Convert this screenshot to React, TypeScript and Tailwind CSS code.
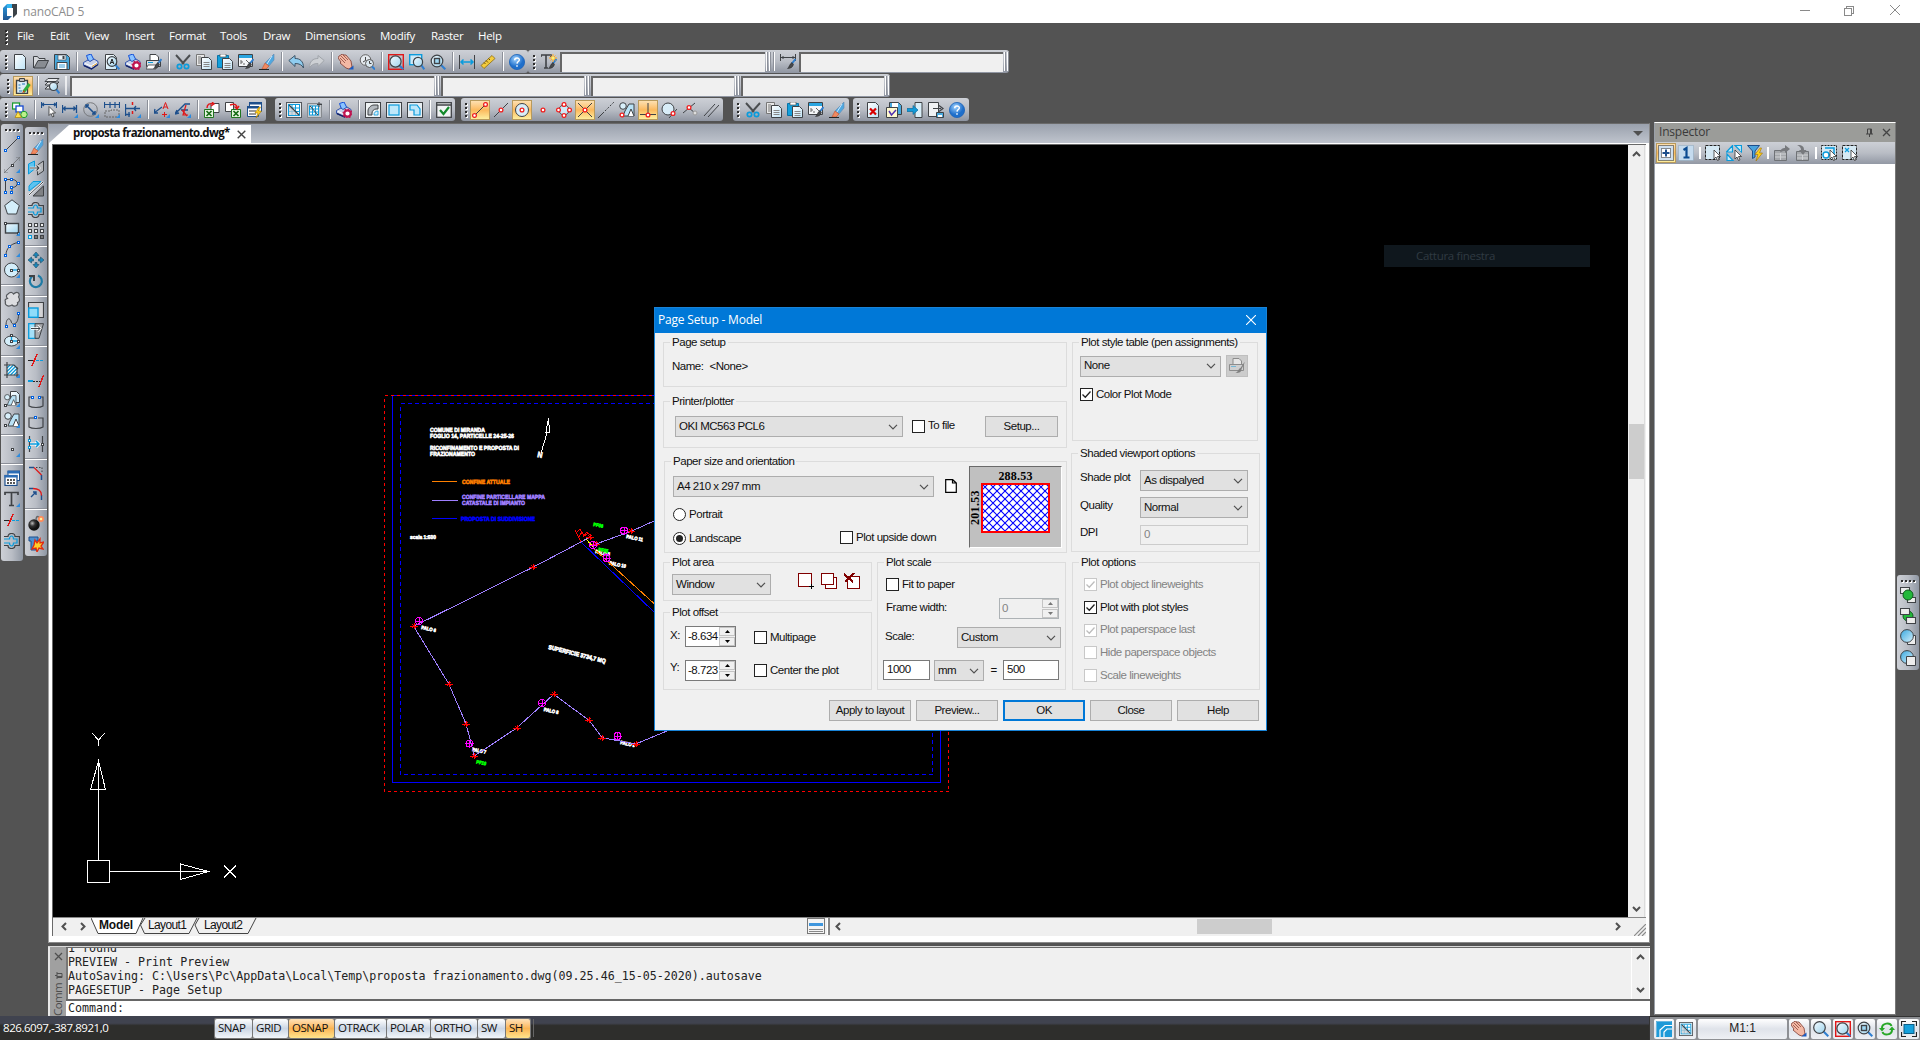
import type { ReactNode } from 'react'

const DK = '#3f4246'
const BL = '#0a9bdc'
const NV = '#1d4f8c'
const LB = '#bfe4f7'
const RD = '#e01818'

const lens = (cx: number, cy: number, r: number) => (
  <>
    <path d={`M${cx + r * 0.7} ${cy + r * 0.7}L15.3 15.3`} stroke="#2f7fd0" strokeWidth="2" />
    <circle cx={cx} cy={cy} r={r} fill="url(#glass)" stroke={DK} strokeWidth="1.2" />
  </>
)
const page = (x: number, y: number, w: number, h: number) => (
  <path d={`M${x} ${y}h${w - 3}l3 3v${h - 3}h-${w}z`} fill="url(#paper)" stroke={DK} />
)
const node = (x: number, y: number, c = '#0060e0', f = '#fff') => (
  <rect x={x - 1} y={y - 1} width="2" height="2" fill={f} stroke={c} shapeRendering="crispEdges" />
)
const ring = (x: number, y: number) => <circle cx={x} cy={y} r="1.9" fill="#fff" stroke="#f02020" strokeWidth="1.3" />
const corner = <path d="M16 12v4h-4z" fill="#2b8be0" />
const cog = (
  <g>
    <circle cx="11.5" cy="11.5" r="3.2" fill="#fff" stroke="#c01550" strokeWidth="2.2" />
    <circle cx="11.5" cy="11.5" r="4.4" fill="none" stroke="#c01550" strokeWidth="1.2" strokeDasharray="1.7 1.7" />
  </g>
)
const printer = (
  <g>
    <path d="M3.500 1.500L8 0l3 6-5 2.500z" fill="#8cc4ff" stroke="#1450d8" />
    <path d="M.5 8.500L5 6l2 1.500L11 5l4 2.500v3L8.500 15 .5 11.500z" fill="#c9d3ea" stroke="#2448a8" strokeWidth=".9" />
    <path d="M1 11.500l7.500 3.500 6.500-4.500" fill="none" stroke="#14246a" strokeWidth="1.500" />
    <path d="M2 9.500l6 2.500 6-3.500" fill="none" stroke="#fff" strokeWidth="1" />
    <path d="M9 12.500l5-3" stroke="#e0a030" />
  </g>
)
const brush = (
  <g>
    <path d="M15.5 5l-4 5" stroke="#2f7fd0" strokeWidth="2" />
    <path d="M12 8.5l1.5 2c-1 3-3 4-6 4 2-1.500 1.500-4 4.500-6z" fill="#46494c" stroke="#222" strokeWidth=".5" />
  </g>
)
const erase = (
  <g>
    <path d="M15 0v6l-5 6-4-3z" fill="#4fa8e0" stroke="#5f88b0" strokeWidth=".6" />
    <path d="M6 9l4 3-3 3H3z" fill="#f08a60" stroke="#c05030" strokeWidth=".6" />
    <path d="M13 2l-5 8" stroke="#cdeaff" />
    <path d="M0 15.500h10" stroke="#222" />
  </g>
)
const cut = (
  <g fill="none">
    <path d="M1 1l8 9M15 1L7 10" stroke="#4a4d50" strokeWidth="1.900" />
    <circle cx="4.500" cy="12.500" r="2.200" stroke={BL} strokeWidth="1.700" />
    <circle cx="11.500" cy="12.500" r="2.200" stroke={BL} strokeWidth="1.700" />
  </g>
)
const copy = (
  <g>
    <path d="M.5.500h8v11h-8z" fill="#e8e8e8" stroke="#777" />
    <path d="M2 3h3M2 5h3M2 7h3M2 9h3" stroke="#777" />
    {page(5.5, 3.5, 10, 12)}
    <path d="M7.500 8.500h6M7.500 10.500h6M7.500 12.500h6" stroke="#888" />
  </g>
)
const paste = (
  <g>
    <path d="M.5 1.500h11v12h-11z" fill="#13a0dc" stroke="#0874a8" />
    <path d="M3 0h6v3H3z" fill="#fff" stroke="#555" strokeWidth=".7" />
    {page(5.5, 4.5, 10, 11)}
    <path d="M7.500 9.500h6M7.500 11.500h6M7.500 13.500h6" stroke="#888" />
  </g>
)
const match = (
  <g>
    <path d="M.5.500h14v12h-14z" fill="#f4f6f8" stroke={DK} />
    <path d="M1 1h13v3H1z" fill="#2aa5e0" />
    <path d="M3 6v4M3 8h2M8 6l3 3M5 10h2" stroke="#666" />
    {brush}
  </g>
)
const help = (
  <g>
    <circle cx="8" cy="8" r="7.600" fill="url(#ball)" stroke="#1c62b8" strokeWidth=".8" />
    <path d="M5.700 6.200c0-3 4.800-2.800 4.600-.2C10.200 7.500 8.100 7.600 8 9.600M8 11.300v1.500" fill="none" stroke="#fff" strokeWidth="1.500" />
  </g>
)
const printset = <g>{printer}{cog}</g>
const zred = (
  <g>
    <rect x=".7" y=".7" width="14.600" height="14.600" fill="none" stroke={RD} strokeWidth="1.400" />
    {lens(7.5, 7.5, 5.6)}
  </g>
)
const zwin = (
  <g>
    {lens(7, 7, 5.8)}
    <rect x="4.500" y="4.500" width="5" height="5" fill="#9fd8f4" stroke={DK} strokeWidth="1.400" />
  </g>
)
const hand = (
  <g>
    <path d="M1 2l2-1 1-1 2 1 2 0 5 6 1 6-3 2-3-1-6-5 1-1-3-4z" fill="#f3b8a4" stroke="#7c3a30" strokeWidth=".8" />
    <path d="M3 2l5 5M5 1l5 5M2 4l5 5" stroke="#7c3a30" strokeWidth=".7" />
    <path d="M15.500 11.500v4h-5z" fill="#1c5cc0" />
  </g>
)
const hatchFrame = (
  <g>
    <rect x=".5" y=".5" width="15" height="15" fill="#e8eef2" stroke="#55585c" />
    <rect x="2.500" y="2.500" width="11" height="11" fill="#fff" stroke={BL} />
    <path d="M6 3v10M9.500 3v10M3 6h10M3 9.500h10" stroke={BL} />
    <path d="M3 3v10h10z" fill="#c8ccd2" opacity=".75" />
    <path d="M3 3l10 10" stroke={DK} strokeWidth="1.200" />
  </g>
)
const shapes = (
  <g>
    <path d="M6 9l4-7h5v12H4z" fill="#b9e2f6" stroke={DK} />
    <path d="M9 14l3-7 3 7" fill="#fff" stroke={DK} />
    <circle cx="4" cy="4" r="3.300" fill="#d8effa" stroke={DK} />
  </g>
)
const trim = (
  <g shapeRendering="crispEdges">
    <path d="M0 8h6" stroke="#222" />
    <path d="M8 8h8" stroke={BL} strokeDasharray="3 1" />
    <path d="M9 2L4 14" stroke={RD} strokeWidth="1.500" />
  </g>
)
const contour = (
  <g fill="none">
    <path d="M0 3.500h4c0-4 7-4 7 0h4.500v9H11c0 4-7 4-7 0H0" stroke={DK} strokeWidth="1.200" />
    <path d="M0 6h5.500c0-4 4-4 4 0h3.500v4H9.500c0 4-4 4-4 0H0" stroke={BL} strokeWidth="1.200" />
  </g>
)
const arrowCursor = <path d="M0 0v9l2-2 1.500 3.500 1.500-.7L3.500 6.500h3z" fill="#fff" stroke="#333" strokeWidth=".8" />

const ICONS: Record<string, ReactNode> = {
  new: page(2.5, 0.5, 11, 15),
  open: (
    <g>
      <path d="M.5 14V2.500h4l1.500 2h6V7" fill="#d6d9dd" stroke={DK} />
      <path d="M1 14L5 6.500h10.500L12 14z" fill="#888c92" stroke={DK} />
    </g>
  ),
  save: (
    <g>
      <path d="M.5.500h12l3 3v12H.5z" fill="#49a9dd" stroke={DK} />
      <path d="M4 1h8v5H4z" fill="#eaf4fa" stroke={DK} strokeWidth=".6" />
      <path d="M8.500 2h2v3h-2z" fill={DK} />
      <path d="M3 8.500h10v7H3z" fill="#fff" stroke={DK} />
      <path d="M5 11h6M5 13h6" stroke="#3a9fd8" />
    </g>
  ),
  print: printer,
  preview: (
    <g>
      {page(1.5, 0.5, 11, 15)}
      {lens(8, 7.5, 4.8)}
      <path d="M6.200 10L8 5l1.800 5M7 8.500h2" fill="none" stroke="#222" />
    </g>
  ),
  printset,
  printbrush: (
    <g>
      <path d="M4 6V.500h6l2.500 2.500V6" fill="#fff" stroke={DK} />
      <path d="M.5 6.500h14v6H.5z" fill="#dfe2e5" stroke={DK} />
      <path d="M2 11h8v4H0z" fill="#fff" stroke={DK} strokeWidth=".8" />
      <path d="M2 8.500h5" stroke={BL} />
      {brush}
    </g>
  ),
  cut, copy, paste, match, erase,
  undo: <path d="M.8 6.500L7 1.500v3c5 0 8.500 2.500 8.500 9.500-1.500-3-4-4.500-8.500-4.500v3z" fill="#8fcdf0" stroke="#3e5568" />,
  redo: <path d="M15.200 6.500L9 1.500v3C4 4.500.5 7 .5 14 2 11 4.500 9.500 9 9.500v3z" fill="#cdd0d4" stroke="#a0a4aa" />,
  hand,
  zclock: (
    <g>
      <circle cx="6.500" cy="6" r="5.300" fill="#e6ebf0" stroke="#666" />
      <circle cx="10.500" cy="9.500" r="4" fill="#dbe8f0" stroke="#555" />
      <path d="M6.500 3v3.500L4 8M10.500 7v2.500h2" fill="none" stroke="#444" />
      <path d="M13 12.500l3 3" stroke="#2f7fd0" strokeWidth="2" />
    </g>
  ),
  zred,
  zblue: (
    <g>
      <rect x=".7" y=".7" width="12" height="10" fill="#cfe9f6" stroke={BL} strokeWidth="1.400" />
      {lens(9, 8, 4.6)}
    </g>
  ),
  zwin,
  measure: (
    <g>
      <path d="M.5 1v14M15.500 1v14" stroke={DK} />
      <path d="M2 8h12M4.500 5.500L2 8l2.500 2.500M11.500 5.500L14 8l-2.500 2.500" fill="none" stroke={BL} strokeWidth="1.500" />
    </g>
  ),
  ruler: (
    <g>
      <path d="M12 1.500l3 3L4 14.500l-3-3z" fill="#f4cc3c" stroke="#8a6a10" strokeWidth=".8" />
      <path d="M4 8.500l1.500 1.500M6 6.500l2 2M8.500 4.500L10 6" stroke="#6a5008" />
    </g>
  ),
  help,
  tstyle: (
    <g>
      <path d="M0 3V1h10v2M5 1v13M3 14h4" fill="none" stroke={DK} strokeWidth="1.600" />
      {brush}
      <path d="M12 0v8M8 4h8M9.500 1.500l5 5M14.500 1.500l-5 5" stroke="#ffa820" />
      <circle cx="12" cy="4" r="1.500" fill="#fff36a" />
    </g>
  ),
  dimstyle: (
    <g>
      <path d="M.5 0v7M15.500 0v7M1 3.500h14M3 2v3M13 2v3" stroke={DK} />
      {brush}
    </g>
  ),
  note: (
    <g>
      <path d="M1.500 2.500h11v13h-11z" fill="#dcecf5" stroke={DK} strokeWidth="1.300" />
      <path d="M4.500.500h5v3h-5z" fill="#bbb" stroke={DK} />
      <path d="M3.500 7h2M3.500 10h2M7 6h3M4 13h3" stroke="#2277bb" />
      <path d="M14.500 6l-6 8" stroke="#2fae3c" strokeWidth="3" />
      <path d="M9 12l-2 3 3-1" fill="#d04010" />
    </g>
  ),
  layerzoom: (
    <g>
      <path d="M4 .500h11l-3 3H1zM4 4h11l-3 3H1zM4 8h9l-3 3H1z" fill="#e9ebee" stroke={DK} />
      {lens(9.5, 8.5, 4)}
    </g>
  ),
  layers: (
    <g>
      <rect x=".5" y="1" width="7" height="6" fill="#fff" stroke="#1a9b30" strokeWidth="1.300" />
      <rect x="4" y="4" width="7" height="6" fill="#fff" stroke="#1548d0" strokeWidth="1.300" />
      <circle cx="12" cy="12.500" r="3.200" fill="#bdf08a" stroke="#1a9b30" />
      <path d="M3 15.500l3-6 3.500 6z" fill="#ffe24a" stroke="#b08a10" strokeWidth=".8" />
    </g>
  ),
  dimlin: (
    <g>
      <path d="M.5 0v6M15.500 0v6M1 2.500h14M3 1L1 2.500 3 4M13 1l2 1.500L13 4" fill="none" stroke={NV} strokeWidth="1.200" />
      <g transform="translate(8 4.500)">{arrowCursor}</g>
    </g>
  ),
  dimhor: (
    <g>
      <path d="M.5 3v8M14.500 3v8M1 6.500h14M3.500 4.500l-2 2 2 2M11.500 4.500l2 2-2 2" fill="none" stroke={NV} strokeWidth="1.300" />
      {corner}
    </g>
  ),
  dimdia: (
    <g>
      <circle cx="7.500" cy="7.500" r="6.800" fill="none" stroke="#77797d" />
      <path d="M3 3l9 9M3 6V3h3M12 9v3H9" fill="none" stroke={NV} strokeWidth="1.500" />
      {corner}
    </g>
  ),
  dimcont: (
    <g>
      <path d="M.5 0v6M6 0v6M11 0v6M15.500 0v6M1 2.500h14" stroke={NV} strokeWidth="1.200" />
      <path d="M1 15V9h6v-1h8v7z" fill="none" stroke="#666" strokeDasharray="2 1" />
      {corner}
    </g>
  ),
  dimbreak: (
    <g>
      <path d="M.5 2v12M1 6.500h14M11 4L9 6.500 11 9M4 10v5M1 12.500h4" fill="none" stroke={NV} strokeWidth="1.300" />
      <path d="M7.500 0v3M7.500 9v3" stroke={RD} strokeWidth="1.500" />
      {corner}
    </g>
  ),
  leader1: (
    <g>
      <path d="M0 11l8-6M0 11l1-4M0 11h4" stroke={NV} strokeWidth="1.300" />
      <path d="M9 7l2.500-6.500L14 7M10 5h3M10.500 10v5M8 12.500h5" fill="none" stroke={RD} />
      {corner}
    </g>
  ),
  leader2: (
    <g>
      <path d="M6 8h7M0 12L10 2h5M0 12l2-4M0 12l4-1" fill="none" stroke={NV} strokeWidth="1.300" />
      <path d="M11 3L8 13h5M7 8l5 6" fill="none" stroke={RD} strokeWidth="1.200" />
      {corner}
    </g>
  ),
  xl1: (
    <g>
      <path d="M7 1.500h8v9H7z" fill="#fff" stroke={DK} />
      <path d="M.5 7.500h9v8h-9z" fill="#e5f5df" stroke="#207520" />
      <path d="M2.500 9l5 5M7.500 9l-5 5" stroke="#156a15" strokeWidth="1.700" />
      <path d="M3 6c0-4 3-5 6-4M8 0l2 2-3 2" fill="none" stroke={RD} strokeWidth="1.400" />
    </g>
  ),
  xl2: (
    <g>
      <path d="M.5.500h8v9h-8z" fill="#fff" stroke={DK} />
      <path d="M6.500 7.500h9v8h-9z" fill="#e5f5df" stroke="#207520" />
      <path d="M8.500 9l5 5M13.500 9l-5 5" stroke="#156a15" strokeWidth="1.700" />
      <path d="M5 3c5-2 7 0 7 3M9.500 4.500L12 7l2-3" fill="none" stroke={RD} strokeWidth="1.400" />
    </g>
  ),
  tabbolt: (
    <g>
      <path d="M3.500.500h12v9h-12z" fill="#fff" stroke={NV} />
      <path d="M3 0h13v2.500H3z" fill={NV} />
      <path d="M1.500 4.500h11v10h-11z" fill="#fff" stroke={NV} />
      <path d="M1 4h12v2.500H1z" fill={NV} />
      <path d="M3 9h7M3 12h7" stroke="#333" />
      <path d="M13 5l-4 6h3l-2 5 5.500-7h-3l2-4z" fill="#ffd21c" stroke="#b07a00" strokeWidth=".6" />
    </g>
  ),
  hatch1: hatchFrame,
  hatch2: (
    <g>
      <path d="M.5 1.500h14v14H.5z" fill="#c5c9ce" stroke="#85898e" />
      <rect x="2.500" y="4" width="9" height="9" fill="#fff" stroke={BL} />
      <path d="M5.500 4v9M8.500 4v9M3 7h8M3 10h8" stroke={BL} />
      <path d="M3 4l8 9M12 0v5M10 2.500h5" stroke={DK} />
    </g>
  ),
  vparc: (
    <g>
      <rect x=".5" y=".5" width="15" height="15" fill="#eef2f4" stroke={DK} />
      <path d="M3 13V9c0-3 3-6 6-6h4v4h-2c-2 0-4 2-4 4v2z" fill="#b4bac0" stroke={DK} />
      <path d="M9 13c0-2 1-4 4-4v4z" fill="#d5f0fb" stroke={BL} strokeWidth=".8" />
    </g>
  ),
  vprect: (
    <g>
      <rect x=".5" y=".5" width="15" height="15" fill="#e8eef2" stroke={DK} />
      <rect x="3" y="3" width="10" height="10" fill="#bfe8fa" stroke={BL} strokeWidth="1.200" />
    </g>
  ),
  vppoly: (
    <g>
      <rect x=".5" y=".5" width="15" height="15" fill="#e8eef2" stroke={DK} />
      <path d="M3 3h7l3 4v6H7V8H3z" fill="#bfe8fa" stroke={BL} strokeWidth="1.200" />
    </g>
  ),
  check: (
    <g>
      <rect x=".7" y=".7" width="14.600" height="14.600" fill="#f2f4f5" stroke={DK} strokeWidth="1.300" />
      <path d="M1 3h14" stroke={DK} strokeWidth="1.500" />
      <path d="M4 8l3.500 4L13 5" fill="none" stroke="#128a2a" strokeWidth="2.200" />
    </g>
  ),
  snend: <g><path d="M3 13L13 3" stroke={DK} />{ring(2.5, 13.5)}{ring(13.5, 2.5)}</g>,
  snmid: <g><path d="M1 15L15 1" stroke={DK} />{ring(8, 8)}</g>,
  sncen: <g><circle cx="8" cy="8" r="6.500" fill="#d8edf8" stroke={DK} />{ring(8, 8)}</g>,
  snnode: ring(8, 8),
  snquad: (
    <g>
      <circle cx="8" cy="8" r="5" fill="#cfe8f6" stroke={DK} />
      {ring(8, 2.5)}{ring(13.5, 8)}{ring(8, 13.5)}{ring(2.5, 8)}
    </g>
  ),
  snint: <g><path d="M1 1l14 14M15 1L1 15" stroke={DK} />{ring(8, 8)}</g>,
  snext: <g><path d="M0 16l6-6" stroke={DK} /><path d="M7 9l9-9" stroke={DK} strokeDasharray="2 1.500" /></g>,
  snins: <g>{shapes}{ring(3, 13)}</g>,
  snperp: <g><path d="M8 1v12M0 12.500h16" stroke={DK} />{ring(8, 13)}</g>,
  sntan: <g><circle cx="7" cy="7" r="6" fill="#d8edf8" stroke={DK} /><path d="M8 16l8-9" stroke={DK} />{ring(12, 11.5)}</g>,
  snnear: (
    <g>
      <path d="M1 11l6-5 6-5M7 6l6 5" stroke={DK} />
      {ring(7, 5.5)}
      <circle cx="13" cy="11" r="2" fill="#ddd" stroke="#999" />
    </g>
  ),
  snpar: <path d="M1 14L12 2M5 15L16 3" stroke={DK} />,
  xdel: <g>{page(2.5, 0.5, 11, 15)}<path d="M5 6.500l6 6M11 6.500l-6 6" stroke="#d80000" strokeWidth="2.200" /></g>,
  savecheck: (
    <g>
      <path d="M3.500.500h9l3 3v9h-12z" fill="#49a9dd" stroke={DK} />
      <path d="M6 1h6v4H6z" fill="#fff" />
      <path d="M.5 5.500h11v10H.5z" fill="#fff9cf" stroke={DK} />
      <path d="M3 9l2.500 4L10 8" fill="none" stroke="#5030b0" strokeWidth="1.500" />
    </g>
  ),
  import: (
    <g>
      <path d="M8 .500h7v15H8z" fill="#d9eef8" stroke={DK} />
      <path d="M0 6.500h6v-3l5 4.500-5 4.500v-3H0z" fill="#129ad8" stroke="#0b6a9c" strokeWidth=".7" />
    </g>
  ),
  export: (
    <g>
      <path d="M.5.500h10v14H.5z" fill="#f0f2f4" stroke={DK} />
      <path d="M5 6.500h8M11 3.500l4 3-4 3" fill="none" stroke={DK} strokeWidth="1.200" />
      <path d="M8.500 10.500h7v5h-7z" fill="#49a9dd" stroke={DK} />
      <path d="M10 13h4v2h-4z" fill="#fff" />
    </g>
  ),
  line: <g><path d="M2 14L14 2" stroke={DK} />{node(1.5, 14.5)}{node(14.5, 1.5)}</g>,
  xline: (
    <g>
      <path d="M0 16L16 0M0 12v4h4M12 0h4v4" fill="none" stroke="#777a7e" />
      {node(8, 8, DK)}
      {corner}
    </g>
  ),
  pline: (
    <g>
      <path d="M1.500 14V1.500H8c7 0 7 8 0 8v4" fill="none" stroke={DK} />
      {node(1.5, 1.5)}{node(7.5, 1.5)}{node(14.5, 5)}{node(7.5, 9.5)}{node(1.5, 14.5)}{node(7.5, 14.5)}
    </g>
  ),
  pentagon: <path d="M8 .800L15.300 6.500 12.500 15h-9L.7 6.500z" fill="#d4eefa" stroke={DK} />,
  rect: (
    <g>
      <rect x="1.500" y="3.500" width="13" height="9.500" fill="url(#glass)" stroke={DK} strokeWidth="1.400" />
      {node(1.5, 3, DK)}{node(14, 13, DK)}
      {corner}
    </g>
  ),
  arc: <g><path d="M2 14C2 8 6 3 14 1.500" fill="none" stroke={DK} />{node(1.5, 14.500)}{node(5.500, 5.500)}{node(14.500, 1.500)}{corner}</g>,
  circle: (
    <g>
      <circle cx="7.500" cy="8" r="7" fill="#d4eefa" stroke={DK} />
      <path d="M8 8h6" stroke={BL} strokeWidth="1.300" />
      {node(7.5, 8, DK)}{node(14.5, 8, DK)}
      {corner}
    </g>
  ),
  cloud: (
    <path
      d="M4 3c3-3 5-1 5.500 0C13-.5 16.500 2 14.500 6c2 3 .5 5-1 5.500 1 3-3 5-5.500 2.500C4 16.500.5 14 1.500 11 .5 9 1.500 8 3.500 7.500 2 6 2 4 4 3z"
      fill="#dcdde0" stroke="#55585c" strokeWidth="1.200"
    />
  ),
  spline: <g><path d="M2 14c0-9 4-8 5-5 1 6 8 3 7.500-7" fill="none" stroke={DK} />{node(2, 14.500)}{node(10, 13.500)}{node(14.500, 1.500)}</g>,
  ellipse: (
    <g>
      <ellipse cx="7.500" cy="8" rx="7" ry="5" fill="#d4eefa" stroke={DK} />
      <path d="M8 8h6M7.500 4v4" stroke={BL} strokeWidth="1.300" />
      {node(7.5, 8, DK)}{node(14.5, 8, DK)}{node(7.5, 2.5, DK)}
      {corner}
    </g>
  ),
  hatch: (
    <g>
      <path d="M3 3h7l3 3v7H3z" fill="#fff" />
      <path d="M3 6l3-3M3 9.500L9.500 3M3 13l9-9M6.500 13L13 6.500M10 13l3-3" stroke={BL} strokeWidth="1.300" />
      <path d="M3 0v16M13 5v10M0 3h10l4 4M0 13h15" fill="none" stroke={DK} strokeWidth="1.200" />
      {corner}
    </g>
  ),
  block1: (
    <g>
      {page(6.5, 0.5, 9, 11)}
      <g transform="translate(0 3) scale(.8)">{shapes}</g>
      {node(1.5, 14, DK)}
      {corner}
    </g>
  ),
  block2: <g>{shapes}{node(1.5, 13, DK)}{corner}</g>,
  point: <g>{node(8, 8, DK)}{corner}</g>,
  table: (
    <g>
      <rect x="4" y="1" width="11.500" height="9.500" fill="#fff" stroke={NV} />
      <path d="M3.500 1h12v2.500h-12z" fill="#2b6cb5" />
      <rect x="1" y="5.500" width="12" height="10" fill="#fff" stroke={NV} strokeWidth="1.200" />
      <path d="M.5 5h13v2.500H.5z" fill="#2b6cb5" />
      <path d="M3 10h8M3 13h8" stroke="#222" strokeWidth="1.500" strokeDasharray="2 1" />
    </g>
  ),
  text: <g><path d="M1 4V1.500h13V4M7.500 1.500v13M5 14.500h5" fill="none" stroke={DK} strokeWidth="1.700" />{corner}</g>,
  trim, contour,
  mirror: (
    <g>
      <path d="M.5 14V4l6-3v8z" fill="#5cc3f0" stroke={BL} />
      <path d="M9.500 9V5l6-4v10l-6 4z" fill="#b5b7ba" stroke={DK} />
      <path d="M2 8h9M8.500 5.500L11 8l-2.500 2.500" fill="none" stroke="#fff" strokeWidth="2.600" />
      <path d="M2 8h9M8.500 5.500L11 8l-2.500 2.500" fill="none" stroke={DK} strokeWidth="1.200" />
    </g>
  ),
  mirror2: (
    <g>
      <path d="M1 10V5l4-4.500h8z" fill="#5cc3f0" stroke={BL} />
      <path d="M5 15L15.500 5v10z" fill="#7f8184" stroke={DK} />
      <path d="M1 14L15 1" stroke="#fff" strokeWidth="2" />
      <path d="M1 14L15 1" stroke={DK} />
    </g>
  ),
  array: (
    <g fill="#f0f0f0" stroke={DK} strokeWidth="1.100" shapeRendering="crispEdges">
      {[1, 7, 13].map((x) => [1, 7, 13].map((y) => (
        <rect key={`${x}-${y}`} x={x - 0.5} y={y - 0.5} width="3" height="3"
          fill={x === 1 && y === 13 ? '#cdeffc' : y === 13 ? '#777' : '#f0f0f0'} stroke={x === 1 && y === 13 ? BL : DK} />
      )))}
    </g>
  ),
  move: (
    <g fill="#1a88bc" stroke="#2c5870" strokeWidth=".7">
      <path d="M8 0l3 3.500H9v2H7v-2H5zM8 16l3-3.500H9v-2H7v2H5zM0 8l3.500-3v2h2v2h-2v2zM16 8l-3.500-3v2h-2v2h2v2z" />
    </g>
  ),
  rotate: (
    <g fill="none">
      <path d="M10 2.500A6 6 0 1 1 4 3.500" stroke="#1f7ba5" strokeWidth="2.200" />
      <path d="M1 3h5v5" stroke={DK} strokeWidth="2" />
    </g>
  ),
  scale: (
    <g>
      <path d="M.5.500h15v15h-15z" fill="#d4d4d6" stroke={DK} strokeWidth="1.200" />
      <rect x=".7" y="6" width="9.300" height="9.300" fill="#8fdcfa" stroke={BL} strokeWidth="1.400" />
    </g>
  ),
  stretch: (
    <g>
      <path d="M.7.700h8v14.600h-8z" fill="#a5e0f8" stroke={BL} strokeWidth="1.300" />
      <path d="M7 .700h8.500L11 15.300H7z" fill="#a9abae" stroke={DK} />
      <path d="M3 5.500h9M9.500 3L12 5.500 9.500 8" fill="none" stroke="#fff" strokeWidth="2.500" />
      <path d="M3 5.500h9M9.500 3L12 5.500 9.500 8" fill="none" stroke={DK} />
    </g>
  ),
  extend: (
    <g shapeRendering="crispEdges">
      <path d="M0 8h5" stroke={BL} strokeWidth="1.300" />
      <path d="M5 8h7" stroke="#222" strokeDasharray="2 1" />
      <path d="M15.500 2L11 14" stroke={RD} strokeWidth="1.500" />
    </g>
  ),
  break1: <g><path d="M3 3H1v9c3 2 11 2 14 0V3h-2" fill="none" stroke={DK} strokeWidth="1.200" />{node(4.5, 3)}{node(11.5, 3)}</g>,
  break2: <g><path d="M6 3H1v9c3 2 11 2 14 0V3h-5" fill="none" stroke={DK} strokeWidth="1.200" />{node(7.5, 2.500)}</g>,
  join: (
    <g>
      <path d="M1.500 0v16M14.500 0v16" stroke={DK} strokeWidth="1.200" />
      <path d="M2 8h9M8 5l3 3-3 3" fill="none" stroke="#fff" strokeWidth="3" />
      <path d="M2 8h9M8 5l3 3-3 3" fill="none" stroke={BL} strokeWidth="1.500" />
      {node(1.5, 4, BL)}{node(1.5, 11, BL)}{node(14.5, 8, DK)}
    </g>
  ),
  chamfer: (
    <g>
      <path d="M1 2.500h5M13.500 10v5" stroke={NV} strokeWidth="1.500" />
      <path d="M8 2.500h6v6" fill="none" stroke={DK} strokeDasharray="1.500 1.500" />
      <path d="M6 2.500l7.500 7.500" stroke={RD} strokeWidth="1.300" />
    </g>
  ),
  fillet: (
    <g>
      <path d="M1 2.500h4M13.500 9v5M3 11l5-5M5 6h3v3" fill="none" stroke={NV} strokeWidth="1.400" />
      <path d="M5 2.500c5 0 8.500 2 8.500 7" fill="none" stroke={RD} strokeWidth="1.300" />
    </g>
  ),
  bomb: (
    <g>
      <circle cx="6" cy="10" r="5.700" fill="url(#bomb)" />
      <path d="M8 5c0-5 3-4 4-1" fill="none" stroke="#666" strokeWidth="1.300" />
      <circle cx="13" cy="4" r="3" fill="#ff8a5a" />
      <circle cx="13" cy="4" r="1.300" fill="#fff29a" />
    </g>
  ),
  explode: (
    <g>
      <path d="M1 1h9v4H8v9H3V5H1z" fill="#4f90d0" stroke={NV} />
      <path d="M7 4l2 3 3-4 0 4 4-1-3 4 2 3-4-1-2 4-1-4-4 1 2-4z" fill="#ffcf2a" stroke="#e02a10" strokeWidth="1.300" />
    </g>
  ),
  ord1: (
    <g>
      <path d="M.5.500h9v6h-9zM7.500 10.500h8v5h-8z" fill="#ececec" stroke={DK} strokeWidth="1.100" />
      <circle cx="8" cy="8" r="5" fill="#22b83a" stroke="#0d5a1a" />
    </g>
  ),
  ord2: (
    <g>
      <circle cx="8" cy="8" r="5" fill="#22b83a" stroke="#0d5a1a" />
      <path d="M.5.500h9v6h-9zM6.500 9.500h9v6h-9z" fill="#ececec" stroke={DK} strokeWidth="1.100" />
    </g>
  ),
  ord3: <g><path d="M7.500 6.500h8v9h-8z" fill="#ececec" stroke={DK} /><circle cx="7" cy="7" r="6.400" fill="url(#ball2)" stroke={DK} /></g>,
  ord4: <g><circle cx="7" cy="7" r="6.400" fill="url(#ball2)" stroke={DK} /><path d="M6.500 6.500h9v9h-9z" fill="#ececec" stroke={DK} /></g>,
  inadd: (
    <g>
      <rect x=".5" y=".5" width="15" height="15" fill="#cfe0f0" stroke="#222" strokeDasharray="1 1" />
      <rect x="3.500" y="3.500" width="9" height="9" fill="#fff" stroke="#222" strokeDasharray="1 1" />
      <path d="M8 4.500v7M4.500 8h7" stroke={NV} strokeWidth="2" />
    </g>
  ),
  inone: (
    <g>
      <rect x=".5" y=".5" width="15" height="15" fill="#c5dbee" stroke="#8aa4bb" strokeDasharray="1 1" />
      <path d="M5.500 5l3-2v9.500M5.500 12.500h6" fill="none" stroke="#0a4a90" strokeWidth="2.200" />
    </g>
  ),
  insel: (
    <g>
      <rect x=".5" y=".5" width="14" height="14" fill="#d5e9f4" stroke="#222" strokeDasharray="3 1" />
      <g transform="translate(9 5)">{arrowCursor}</g>
    </g>
  ),
  insim: (
    <g>
      <path d="M.5 7l6-6.500v6.500zM1 15.500V9l6 6.500zM9 .500h6.500V7z" fill="#c5ecfb" stroke={BL} strokeWidth="1.200" />
      <g transform="translate(9 5)">{arrowCursor}</g>
    </g>
  ),
  infilt: (
    <g>
      <path d="M.5.500h12L8 6v6l-2.500 1.500V6z" fill="#4aa3dd" stroke={NV} />
      <path d="M13 3l-5 6.500h3L9 16l6.500-8h-3l2-5z" fill="#ffd21c" stroke="#a07000" strokeWidth=".6" />
    </g>
  ),
  ingr1: (
    <g>
      <path d="M.5 5.500h12v10H.5z" fill="#a5a8ac" stroke="#6f7276" />
      <path d="M1 9h11M1 12h11M6.500 6v9" stroke="#d0d2d5" />
      <path d="M6 8c0-4 3-5 5-5V0l5 4-5 4V6c-2 0-3 0-5 2z" fill="#77797d" />
    </g>
  ),
  ingr2: (
    <g>
      <path d="M1.500 6.500h12v9h-12z" fill="#a5a8ac" stroke="#6f7276" />
      <path d="M2 10h11M2 13h11M7.500 7v8" stroke="#d0d2d5" />
      <path d="M2 0c6 0 7 2 7 5h2.500L8 10 4 5h2C6 3 5 1 2 0z" fill="#77797d" />
    </g>
  ),
  inq1: (
    <g>
      <rect x=".5" y=".5" width="15" height="14" fill="#d5e9f4" stroke="#222" strokeDasharray="2 1" />
      <path d="M4 3h9v7H8" fill="none" stroke={BL} strokeWidth="1.500" />
      <circle cx="5" cy="10" r="3" fill="#fff" stroke={BL} strokeWidth="1.400" />
      <g transform="translate(9 5)">{arrowCursor}</g>
    </g>
  ),
  inq2: (
    <g>
      <rect x=".5" y=".5" width="14" height="14" fill="#d5e9f4" stroke="#222" strokeDasharray="3 1" />
      <path d="M3 3l4 4M7 3L3 7" stroke={BL} strokeWidth="1.200" />
      <g transform="translate(9 5)">{arrowCursor}</g>
    </g>
  ),
  stfill: (
    <g>
      <rect width="16" height="16" fill="#1e9ad8" />
      <path d="M4 16V9l5-4.500h7M8 16v-5l3-3h5" fill="none" stroke="#fff" strokeWidth="1.200" />
      <path d="M.5.500h15M.5.500v15" stroke="#6bb8e0" />
    </g>
  ),
  zoom: lens(6.5, 6.5, 5.8),
  regen: (
    <g fill="none" stroke="#28a828" strokeWidth="2">
      <path d="M3 7c0-5 8-6 9.500-2M13 9c0 5-8 6-9.500 2" />
      <path d="M0 7h6l-3 3.500zM10 9h6l-3-3.500z" fill="#28a828" stroke="none" />
    </g>
  ),
  full: (
    <g>
      <path d="M.5 5V.500H5M11 .500h4.500V5M15.500 11v4.500H11M5 15.500H.5V11" fill="none" stroke="#222" strokeWidth="1.200" />
      <rect x="3" y="3.500" width="10" height="9" fill="#15a0dc" stroke="#0b5d86" />
    </g>
  ),
  grayprint: (
    <g opacity=".75">
      <path d="M4 6V.500h6l2.500 2.500V6" fill="#eee" stroke="#777" />
      <path d="M.5 6.500h14v6H.5z" fill="#cfd0d2" stroke="#777" />
      <path d="M2 8.500h5" stroke="#5ab0d8" />
      <path d="M15.500 4l-4 6c-2 0-2 4-5 5 4 0 6-1 6-4l3-6z" fill="#666" />
    </g>
  ),
}

function Icon({ name, className = '' }: { name: string; className?: string }) {
  return <svg viewBox="0 0 16 16" fill="none" className={`size-4 shrink-0 ${className}`}>{ICONS[name]}</svg>
}

function Defs() {
  return (
    <svg className="absolute size-0">
      <defs>
        <linearGradient id="glass" x1="0" y1="0" x2="1" y2="1"><stop offset="0" stopColor="#f4fbff" /><stop offset="1" stopColor="#9ed4ee" /></linearGradient>
        <linearGradient id="paper" x1="0" y1="0" x2="1" y2="1"><stop offset="0" stopColor="#fff" /><stop offset="1" stopColor={LB} /></linearGradient>
        <radialGradient id="ball" cx=".4" cy=".3"><stop offset="0" stopColor="#9fd2ff" /><stop offset="1" stopColor="#1f6fcb" /></radialGradient>
        <linearGradient id="ball2" x1="0" y1="0" x2="1" y2="1"><stop offset="0" stopColor="#38a8e0" /><stop offset="1" stopColor="#d6f0fb" /></linearGradient>
        <radialGradient id="bomb" cx=".35" cy=".35"><stop offset="0" stopColor="#bbb" /><stop offset=".5" stopColor="#333" /><stop offset="1" stopColor="#111" /></radialGradient>
        <linearGradient id="logo" x1="0" y1="0" x2="0" y2="1"><stop offset="0" stopColor="#2c9be0" /><stop offset="1" stopColor="#1f5590" /></linearGradient>
        <pattern id="mesh" width="8" height="8" patternUnits="userSpaceOnUse">
          <path d="M-1-1l10 10M9-1L-1 9" stroke="#0000ff" strokeWidth="1.100" />
        </pattern>
      </defs>
    </svg>
  )
}

const BAR_H = 'h-[23px] shrink-0 rounded-[3px] bg-gradient-to-b from-[#cdd0d6] via-[#b9bdc5] to-[#8f95a1]'

function Grip() {
  return (
    <div className="flex w-[2px] shrink-0 flex-col gap-[2px]">
      {[0, 1, 2, 3].map((i) => <i key={i} className="block size-[2px] bg-[#2d2d2d] shadow-[1px_1px_0_#fff]" />)}
    </div>
  )
}
function GripH() {
  return (
    <div className="flex gap-[2px]">
      {[0, 1, 2, 3].map((i) => <i key={i} className="block size-[2px] bg-[#2d2d2d] shadow-[1px_1px_0_#fff]" />)}
    </div>
  )
}
function Sep() {
  return <div className="flex w-2 shrink-0 self-stretch py-[2px] pl-[1px]"><i className="w-px bg-[#8c9099]" /><i className="w-px bg-white" /></div>
}
function Cell({ name }: { name: string }) {
  const on = name.endsWith('!')
  return (
    <div className="flex h-full w-[21px] shrink-0 items-center">
      {on ? (
        <span className="-ml-[2px] flex size-[20px] items-center justify-center border border-[#b89a5c] bg-gradient-to-b from-[#fde0b0] via-[#fbb95c] to-[#fdee9e]">
          <Icon name={name.slice(0, -1)} />
        </span>
      ) : (
        <Icon name={name} />
      )}
    </div>
  )
}
function Cells({ items }: { items: string }) {
  return <>{items.split(' ').map((n, i) => (n === '|' ? <Sep key={i} /> : <Cell key={i} name={n} />))}</>
}
function Field({ className }: { className: string }) {
  return (
    <div className="flex h-full shrink-0 items-center">
      <div className={`h-[20px] border-2 border-r-0 border-b-0 border-[#666] border-b-white bg-[#f0f0f0] ${className}`} />
      <i className="ml-[1px] h-[19px] w-px bg-white" /><i className="h-[19px] w-px bg-[#8c9099]" />
      <i className="ml-[1px] h-[19px] w-px bg-white" /><i className="h-[19px] w-px bg-[#8c9099]" />
    </div>
  )
}

const MENU: [string, string][] = [
  ['File', 'w-[33px]'], ['Edit', 'w-[35px]'], ['View', 'w-[40px]'], ['Insert', 'w-[44px]'], ['Format', 'w-[51px]'],
  ['Tools', 'w-[43px]'], ['Draw', 'w-[42px]'], ['Dimensions', 'w-[75px]'], ['Modify', 'w-[51px]'], ['Raster', 'w-[47px]'], ['Help', 'w-[40px]'],
]
const UI = "font-['Open_Sans','Noto_Sans',sans-serif]"

function TitleBar() {
  return (
    <header className={`flex h-[23px] shrink-0 items-center bg-white text-[12px] text-[#8d8d8d] ${UI}`}>
      <svg viewBox="0 0 14 16" className="ml-[3px] h-4 w-[14px]">
        <path d="M4 0h10v10l-4 4V4H4z" fill="#3c4248" />
        <path d="M0 4l4-4v12h5L5 16H0z" fill="url(#logo)" />
        <path d="M4 4h6v8H4z" fill="#fff" />
        <path d="M4 0h5v4H4z" fill="#35b5f0" />
      </svg>
      <span className="ml-[6px] tracking-[-0.15px]">nanoCAD 5</span>
      <svg viewBox="0 0 120 23" className="ml-auto h-[23px] w-[120px]" fill="none" stroke="#8a8a8a" shapeRendering="crispEdges">
        <path d="M0 10.500h10" />
        <path d="M44.500 8.500h7v7h-7zM46.500 8V6.500h7v7H52" />
        <path d="M90 5l10 10M100 5L90 15" shapeRendering="auto" />
      </svg>
    </header>
  )
}

function MenuBar() {
  return (
    <nav className={`flex h-[27px] shrink-0 items-center bg-[#535353] pl-[5px] text-[11.500px] tracking-[-0.300px] text-white ${UI}`}>
      <Grip />
      <div className="ml-[10px] flex pb-[2px]">{MENU.map(([t, w]) => <span key={t} className={w}>{t}</span>)}</div>
    </nav>
  )
}

function Toolbars() {
  return (
    <div className="flex h-[72px] shrink-0 flex-col gap-px">
      <div className="flex h-[23px]">
        <div className={`flex w-[528px] items-center pl-[5px] ${BAR_H}`}>
          <Grip /><i className="w-[5px] shrink-0" />
          <Cells items="new open save | print preview printset printbrush | cut copy paste match erase | undo redo | hand zclock | zred zblue zwin | measure ruler | help" />
        </div>
        <div className={`flex w-[481px] items-center pl-[5px] ${BAR_H}`}>
          <Grip /><i className="w-[6px] shrink-0" />
          <Icon name="tstyle" /><i className="w-[3px] shrink-0" />
          <Field className="w-[205px]" /><i className="w-[2px]" /><Sep />
          <Icon name="dimstyle" /><i className="w-[3px] shrink-0" />
          <Field className="w-[204px]" />
        </div>
      </div>
      <div className={`flex w-[890px] items-center pl-[7px] ${BAR_H}`}>
        <Grip /><i className="w-[6px] shrink-0" />
        <Cells items="note! | layerzoom" /><i className="h-[19px] w-[2px] shrink-0 bg-white/70" /><i className="w-[3px] shrink-0" />
        <Field className="w-[364px]" /><i className="w-[2px]" />
        <Field className="w-[143px]" /><i className="w-[2px]" />
        <Field className="w-[143px]" /><i className="w-[2px]" />
        <Field className="w-[143px]" />
      </div>
      <div className="flex h-[23px]">
        <div className={`flex w-[266px] items-center pl-[5px] ${BAR_H}`}>
          <Grip /><i className="w-[5px] shrink-0" />
          <Cells items="layers | dimlin dimhor dimdia dimcont dimbreak | leader1 leader2 | xl1 xl2 tabbolt" />
        </div>
        <div className={`ml-[9px] flex w-[180px] items-center pl-[4px] ${BAR_H}`}>
          <Grip /><i className="w-[5px] shrink-0" />
          <Cells items="hatch1 hatch2 | printset | vparc vprect vppoly | check" />
        </div>
        <div className={`ml-[6px] flex w-[262px] items-center pl-[4px] ${BAR_H}`}>
          <Grip /><i className="w-[5px] shrink-0" />
          <Cells items="snend! snmid sncen! snnode snquad snint! snext snins snperp! sntan snnear snpar" />
        </div>
        <div className={`ml-[10px] flex w-[116px] items-center pl-[4px] ${BAR_H}`}>
          <Grip /><i className="w-[6px] shrink-0" />
          <Cells items="cut copy paste match erase" />
        </div>
        <div className={`ml-[4px] flex w-[116px] items-center pl-[4px] ${BAR_H}`}>
          <Grip /><i className="w-[6px] shrink-0" />
          <Cells items="xdel savecheck import export help" />
        </div>
      </div>
    </div>
  )
}

function VBar({ items, className }: { items: string; className: string }) {
  return (
    <div className={`flex w-[22px] shrink-0 flex-col items-center rounded-[3px] bg-gradient-to-r from-[#cdd0d6] via-[#b9bdc5] to-[#8f97a3] ${className}`}>
      <GripH />
      <div className="mt-[5px] flex flex-col">
        {items.split(' ').map((n, i) =>
          n === '|' ? (
            <div key={i} className="-mx-[3px] flex h-2 flex-col pt-px"><i className="h-px bg-[#8c9099]" /><i className="h-px bg-white" /></div>
          ) : (
            <Icon key={i} name={n} className="mb-[5px]" />
          ),
        )}
      </div>
    </div>
  )
}

const star = (x: number, y: number) => `M${x - 4} ${y}h8M${x} ${y - 3}v6M${x - 2} ${y - 2}l4 4M${x + 2} ${y - 2}l-4 4`
const target = (x: number, y: number) => (
  <g key={`${x}`}><circle cx={x} cy={y} r="3.500" /><path d={`M${x - 4} ${y}h8M${x} ${y - 4}v8`} /></g>
)

function Label({ x, y, w, color = '#fff', size = 6, turn = 0, children }: { x: number; y: number; w: number; color?: string; size?: number; turn?: number; children: string }) {
  return (
    <text x={x} y={y} fill={color} stroke={color} strokeWidth=".6" fontSize={size} textLength={w} lengthAdjust="spacingAndGlyphs" transform={`rotate(${turn} ${x} ${y})`}>
      {children}
    </text>
  )
}

function Drawing() {
  return (
    <svg viewBox="53 145 1575 772" className="block h-[772px] w-[1575px]" fill="none" shapeRendering="crispEdges">
      <g>
        <path d="M392.500 395v388M940.500 395v388" stroke="#00f" />
        <path d="M393 395.500h548" stroke="#00f" />
        <path d="M392 782.500h549" stroke="#00f" />
        <rect x="400.500" y="403.500" width="532" height="371" stroke="#00f" strokeDasharray="4 3" />
        <rect x="384.500" y="395.500" width="564" height="396" stroke="#f00" strokeDasharray="3 3" />
      </g>
      <g fontFamily="Liberation Sans" fontWeight="bold" textRendering="geometricPrecision">
        <Label x={430} y={431.5} w={55}>COMUNE DI MIRANDA</Label>
        <Label x={430} y={437.5} w={84}>FOGLIO 14, PARTICELLE 24-25-26</Label>
        <Label x={430} y={450} w={89}>RICONFINAMENTO E PROPOSTA DI</Label>
        <Label x={430} y={456} w={45}>FRAZIONAMENTO</Label>
        <Label x={462} y={483.5} w={48} color="#ff8000">CONFINE ATTUALE</Label>
        <Label x={462} y={499} w={83} color="#9f7fff">CONFINE PARTICELLARE MAPPA</Label>
        <Label x={462} y={505} w={63} color="#9f7fff">CATASTALE DI IMPIANTO</Label>
        <Label x={461} y={520.5} w={74} color="#0000ff">PROPOSTA DI SUDDIVISIONE</Label>
        <Label x={410} y={539} w={26} size={5.5}>scala 1:500</Label>
        <Label x={548} y={649} w={59} turn={14}>SUPERFICIE 3734,7 MQ</Label>
        <Label x={421} y={629} w={15} size={5} turn={12}>PALO 6</Label>
        <Label x={472} y={751} w={14} size={5} turn={12}>PALO 7</Label>
        <Label x={543.5} y={711} w={15} size={5} turn={12}>PALO 8</Label>
        <Label x={620} y={744} w={15} size={5} turn={12}>PALO 9</Label>
        <Label x={626} y={538} w={17} size={5} turn={12}>PALO 11</Label>
        <Label x={595} y={553} w={15} size={5} turn={12}>PALO 5</Label>
        <Label x={609} y={564.5} w={17} size={5} turn={12}>PALO 10</Label>
        <Label x={593} y={526} w={10} size={5} turn={12} color="#00ff00">PF06</Label>
        <Label x={598} y={551} w={10} size={5} turn={12} color="#00ff00">PF05</Label>
        <Label x={476} y={763.5} w={10} size={5} turn={12} color="#00ff00">PF10</Label>
        <Label x={537} y={457} w={5} size={8} turn={12}>N</Label>
      </g>
      <path d="M548.500 418l-2.500 14h3.500zM547 433l-6 20" stroke="#fff" />
      <path d="M432 481.500h25M593 548L654 603.500" stroke="#ff8000" />
      <path d="M432 500.500h26" stroke="#9f7fff" />
      <path d="M432 518.500h25M581 542L654 612" stroke="#00f" />
      <path d="M586 539l8 9" stroke="#ff0" />
      <path
        d="M654 521l-22 10-36 13M589 537.500l-8 4.500-47.500 25-119.800 59.300 35 57.400 17.300 40 8.300 32.300 42.400-28 37-33.700 35.300 26 13.300 17.400 33.400 6.300L667 731"
        stroke="#9f7fff"
      />
      <path d={[star(414, 626), star(533, 567), star(449, 684), star(466, 724), star(474, 756), star(517, 728), star(554, 694), star(589, 720), star(602, 738), star(636, 744), star(631, 531), star(590, 537), star(596, 544)].join('')} stroke="#f00" />
      <path d="M575 530l6 12M576 533l4-4M580 529l4 7 5-3M583 537l4-5 3 3M578 538l4-6" stroke="#f00" />
      <g stroke="#f0f">
        {target(419, 621)}{target(469.5, 743.5)}{target(542, 703)}{target(617.5, 736)}{target(624, 530.5)}{target(593, 545)}{target(606.5, 558)}
      </g>
      <g stroke="#fff">
        <path d="M87.500 860.500h22v22h-22zM98.500 860V761M98.500 761l-8 28.500h15zM110 871.500h99M180.500 864v15.500l28-8z" />
        <path d="M92 733l6.500 7L105 733M98.500 740v5.500M224 865.500l12 12M236 865.500l-12 12" />
      </g>
    </svg>
  )
}

function Chevron({ dir, className = '' }: { dir: 'up' | 'down' | 'left' | 'right'; className?: string }) {
  const d = { up: 'M1 6l3.500-3.500L8 6', down: 'M1 3l3.500 3.500L8 3', left: 'M6 1L2.500 4.500 6 8', right: 'M3 1l3.500 3.500L3 8' }[dir]
  return <svg viewBox="0 0 9 9" className={`size-[9px] shrink-0 ${className}`}><path d={d} fill="none" stroke="#505050" strokeWidth="2" /></svg>
}

function DocumentWindow() {
  return (
    <section className="flex h-[820px] w-[1602px] shrink-0 flex-col border border-t-[#6a6a6a] border-r-[#8a8a8a] border-b-[#8a8a8a] border-l-[#a0a0a0] bg-white">
      <div className="flex h-[19px] shrink-0 items-end bg-gradient-to-b from-[#9aa1ad] to-[#bfc4cd]">
        <div className="flex h-[18px] w-[202px] bg-white pl-[24px] text-[11.500px] font-bold leading-[16px] text-[#111] [clip-path:polygon(0_100%,20px_0,100%_0,100%_100%)]">
          <span className={`whitespace-nowrap tracking-[-0.600px] ${UI}`}>proposta frazionamento.dwg*</span>
          <svg viewBox="0 0 9 9" className="mt-[5px] mr-[5px] ml-auto size-[9px] shrink-0"><path d="M.7.700l7.600 7.600M8.300.700L.7 8.300" stroke="#444" strokeWidth="1.400" /></svg>
        </div>
        <svg viewBox="0 0 10 5" className="mb-[7px] ml-auto mr-[6px] h-[5px] w-[10px]"><path d="M0 0h10L5 5z" fill="#505050" /></svg>
      </div>
      <div className="mt-[1px] ml-[3px] mr-[3px] flex h-[792px] flex-col border-t border-l border-[#696969] bg-[#f0f0f0]">
        <div className="flex h-[772px]">
          <div className="relative h-[772px] w-[1575px] bg-black">
            <Drawing />
            <div className={`absolute left-[1331px] top-[100px] h-[22px] w-[206px] bg-[#0f171d] pl-[32px] text-[11.500px] leading-[22px] tracking-[-0.3px] text-[#2f3a42] ${UI}`}>Cattura finestra</div>
          </div>
          <div className="flex w-[17px] flex-col items-center border-r border-[#dcdcdc] bg-[#f0f0f0] pt-[5px] pb-[4px]">
            <Chevron dir="up" />
            <div className="mt-[265px] h-[55px] w-[15px] bg-[#cdcdcd]" />
            <Chevron dir="down" className="mt-auto" />
          </div>
        </div>
        <div className="flex h-[19px] border-t border-[#888]">
          <div className="flex w-[777px] items-start">
            <Chevron dir="left" className="ml-[7px] mt-[4px]" />
            <Chevron dir="right" className="ml-[9px] mt-[4px]" />
            <svg viewBox="0 0 170 18" className="ml-[4px] -mt-px h-[18px] w-[170px]">
              <path d="M1 1l6 15.500h38L52 1z" fill="#fff" />
              <path d="M0 1l7 15.500h38L52 1M54 1l-4.500 7 4 8.500H98L106 1M108 1l-4 7 4 8.500h49L165 1" fill="none" stroke="#444" />
              <g fontFamily="Liberation Sans" fontSize="12" fill="#111">
                <text x="8" y="12" fontWeight="bold" textLength="34">Model</text>
                <text x="57" y="12" textLength="39">Layout1</text>
                <text x="113" y="12" textLength="39">Layout2</text>
              </g>
            </svg>
            <svg viewBox="0 0 18 17" className="ml-auto h-[17px] w-[18px]" shapeRendering="crispEdges">
              <path d="M.5.500h17v15H.5z" fill="#f4f4f4" stroke="#777" />
              <path d="M2 5h14v3H2z" fill="#3f96dd" />
              <path d="M2 11h14M2 13.500h14" stroke="#888" />
            </svg>
            <i className="ml-[2px] h-[17px] w-[3px] border-r-2 border-[#888] bg-white" />
          </div>
          <div className="flex flex-1 pt-[3px]">
            <Chevron dir="left" className="ml-[4px] mt-px" />
            <div className="-mt-[2px] ml-[354px] h-[15px] w-[75px] bg-[#cdcdcd]" />
            <Chevron dir="right" className="mt-px ml-[341px]" />
            <svg viewBox="0 0 12 12" className="ml-auto mt-[3px] size-[12px]"><path d="M0 12L12 0M4 12l8-8M8 12l4-4" stroke="#8a8a8a" strokeWidth="1.200" /></svg>
          </div>
        </div>
      </div>
    </section>
  )
}

function CommandPanel() {
  return (
    <section className="mt-[3px] flex h-[70px] w-[1602px] shrink-0 border-t border-[#d8d8d8]">
      <div className="flex w-[18px] shrink-0 flex-col items-center border-l-2 border-[#e8e8e8] bg-[#a0a0a0] pt-[5px]">
        <svg viewBox="0 0 9 9" className="size-[9px]"><path d="M1 1l7 7M8 1L1 8" stroke="#505050" strokeWidth="1.300" /></svg>
        <svg viewBox="0 0 9 9" className="mt-[10px] size-[9px]"><path d="M1 4.500h2M3 1v7M3 2.500h5v4H3M8 5.500H3" fill="none" stroke="#505050" /></svg>
        <span className={`mt-[3px] h-[33px] w-[16px] rotate-180 text-[11.500px] leading-[16px] tracking-[-0.6px] text-[#4d4d4d] [writing-mode:vertical-rl] ${UI}`}>Comm</span>
      </div>
      <div className="flex flex-1 flex-col border-t border-[#696969] font-['Consolas','DejaVu_Sans_Mono',monospace] text-[11.650px] text-[#222]">
        <div className="flex h-[53px] border-b-2 border-[#666] bg-[#f0f0f0]">
          <div className="flex flex-1 flex-col justify-end overflow-hidden whitespace-pre border-l-2 border-[#777] pb-[2px] leading-[14px]">
            <p>1 found</p>
            <p>PREVIEW - Print Preview</p>
            <p>AutoSaving: C:\Users\Pc\AppData\Local\Temp\proposta frazionamento.dwg(09.25.46_15-05-2020).autosave</p>
            <p>PAGESETUP - Page Setup</p>
          </div>
          <div className="flex w-[19px] flex-col items-center justify-between border-x border-white py-[5px]"><Chevron dir="up" /><Chevron dir="down" /></div>
        </div>
        <div className="flex-1 bg-white pl-[2px] leading-[14px]">Command:</div>
      </div>
    </section>
  )
}

function Inspector() {
  return (
    <aside className="ml-[4px] flex h-[893px] w-[242px] flex-col border border-t-white border-r-[#777] border-b-[#777] border-l-[#9aa0a8]">
      <div className={`flex h-[19px] shrink-0 items-center bg-[#9b9c99] pb-px pl-[4px] text-[12px] tracking-[-0.2px] text-[#3a3a3a] ${UI}`}>
        Inspector
        <svg viewBox="0 0 9 9" className="ml-auto size-[9px]"><path d="M4.500 6v3M1 6h7M2.500 6V1h4v5M5.500 1v5" fill="none" stroke="#444" /></svg>
        <svg viewBox="0 0 9 9" className="ml-[8px] mr-[4px] size-[9px]"><path d="M1 1l7 7M8 1L1 8" stroke="#444" strokeWidth="1.300" /></svg>
      </div>
      <div className="flex h-[22px] shrink-0 items-center bg-gradient-to-b from-[#cdd0d6] via-[#b9bdc5] to-[#9298a4] pl-[3px]">
        <Cells items="inadd!" />
        <i className="-ml-px" />
        <Cells items="inone" />
        <i className="mr-[4px] h-[12px] w-[2px] bg-white" />
        <Cells items="insel insim infilt" />
        <i className="-ml-px mr-[5px] h-[12px] w-[2px] bg-white" />
        <Cells items="ingr1 ingr2" />
        <i className="-ml-px mr-[4px] h-[12px] w-[2px] bg-white" />
        <Cells items="inq1 inq2" />
      </div>
      <div className="flex-1 bg-white" />
    </aside>
  )
}

const MODES: [string, string, boolean][] = [
  ['SNAP', 'w-[37px]', false], ['GRID', 'w-[35px]', false], ['OSNAP', 'w-[45px]', true], ['OTRACK', 'w-[51px]', false],
  ['POLAR', 'w-[43px]', false], ['ORTHO', 'w-[46px]', false], ['SW', 'w-[27px]', false], ['SH', 'w-[24px]', true],
]

function StatusBar() {
  const silver = 'flex h-[20px] items-center justify-center rounded-[2px] bg-gradient-to-b from-white via-[#dfe3ea] to-[#eef0f4]'
  return (
    <footer className={`flex h-6 shrink-0 bg-gradient-to-b from-[#40434f] from-30% to-[#2e2e2c] to-40% ${UI}`}>
      <div className="flex w-[1649px] items-center text-[11.500px]">
        <span className="w-[214px] pb-px pl-[3px] tracking-[-0.450px] text-white">826.6097,-387.8921,0</span>
        <div className="flex gap-px rounded-[2px] bg-[#777] px-px py-px">
          {MODES.map(([t, w, on]) => (
            <span key={t} className={`flex h-[19px] items-center rounded-[2px] pb-px pl-[3px] tracking-[-0.450px] text-[#111] ${w} ${on ? 'bg-gradient-to-b from-[#ffe2b8] via-[#fbb554] to-[#ffe48c]' : 'bg-gradient-to-b from-white via-[#ccd6e4] to-[#f2f6fa]'}`}>{t}</span>
          ))}
        </div>
        <i className="ml-[2px] h-[18px] w-px bg-[#666]" />
      </div>
      <div className="flex flex-1 items-center gap-[2px] border-t border-l border-[#333] bg-[#8e9094] pl-[4px]">
        <span className={`w-[20px] ${silver}`}><Icon name="stfill" /></span>
        <span className={`w-[20px] ${silver}`}><Icon name="hatch1" className="size-[14px]" /></span>
        <span className={`w-[89px] pb-px font-['Liberation_Sans',sans-serif] text-[12px] text-[#222] ${silver}`}>M1:1</span>
        {['hand', 'zoom', 'zred', 'zwin', 'regen', 'full'].map((n) => <span key={n} className={`w-[20px] ${silver}`}><Icon name={n} /></span>)}
      </div>
    </footer>
  )
}

function Group({ title, className, children }: { title: string; className: string; children: ReactNode }) {
  return (
    <section className={`flex shrink-0 flex-col border border-[#dcdcdc] ${className}`}>
      <h3 className="-mt-[9px] mb-px ml-[6px] h-4 shrink-0 self-start bg-[#f0f0f0] px-[2px] leading-4">{title}</h3>
      {children}
    </section>
  )
}
function Combo({ text, className }: { text: string; className: string }) {
  return (
    <div className={`flex h-[21px] shrink-0 items-center justify-between border border-[#adadad] bg-[#e1e1e1] pr-[4px] pl-[3px] ${className}`}>
      {text}
      <svg viewBox="0 0 10 6" className="h-[6px] w-[10px]"><path d="M1 .800l4 4 4-4" fill="none" stroke="#505050" strokeWidth="1.200" /></svg>
    </div>
  )
}
function Check({ text, checked, disabled, className = '' }: { text: string; checked?: boolean; disabled?: boolean; className?: string }) {
  return (
    <div className={`flex h-[13px] shrink-0 items-center gap-[3px] ${disabled ? 'text-[#838383]' : ''} ${className}`}>
      <span className={`flex size-[13px] items-center justify-center border bg-white ${disabled ? 'border-[#c8c8c8]' : 'border-[#222]'}`}>
        {checked && <svg viewBox="0 0 11 11" className="size-[11px]"><path d="M1.500 5.500l2.800 2.800L9.500 2.500" fill="none" stroke={disabled ? '#bdbdbd' : '#222'} strokeWidth="1.300" /></svg>}
      </span>
      {text}
    </div>
  )
}
function Radio({ text, on, className = '' }: { text: string; on?: boolean; className?: string }) {
  return (
    <div className={`flex h-[13px] items-center gap-[3px] ${className}`}>
      <span className="flex size-[13px] items-center justify-center rounded-full border border-[#222] bg-white">{on && <i className="size-[7px] rounded-full bg-[#222]" />}</span>
      {text}
    </div>
  )
}
function Spinner({ value, disabled, className }: { value: string; disabled?: boolean; className: string }) {
  return (
    <div className={`flex h-[21px] shrink-0 border ${disabled ? 'border-[#adb2b5] text-[#838383]' : 'border-[#7a7a7a] bg-white'} ${className}`}>
      <span className="flex-1 overflow-hidden pl-[2px] leading-[18px]">{value}</span>
      <div className="flex w-[16px] flex-col gap-px bg-[#f0f0f0]">
        {['M0 3l2.500-3L5 3z', 'M0 0l2.500 3L5 0z'].map((d) => (
          <span key={d} className="flex h-[9px] items-center justify-center border border-[#c4c4c4] bg-[#f0f0f0]">
            <svg viewBox="0 0 5 3" className="h-[3px] w-[5px]"><path d={d} fill={disabled ? '#777' : '#000'} /></svg>
          </span>
        ))}
      </div>
    </div>
  )
}
function Button({ text, primary, className = 'w-[82px]' }: { text: string; primary?: boolean; className?: string }) {
  return <button className={`h-[21px] shrink-0 bg-[#e1e1e1] text-center ${primary ? 'border-2 border-[#0078d7] leading-[17px]' : 'border border-[#adadad] leading-[19px]'} ${className}`}>{text}</button>
}

function PageSetupDialog() {
  return (
    <div className="absolute top-[307px] left-[654px] flex h-[424px] w-[613px] flex-col border border-[#1883d7] bg-[#f0f0f0] font-['Liberation_Sans_Narrow','Liberation_Sans',sans-serif] text-[11.500px] tracking-[-0.470px] text-[#111]">
      <div className={`flex h-[25px] shrink-0 items-center bg-[#0078d7] pb-[2px] pl-[3px] text-[12px] tracking-[-0.2px] text-white ${UI}`}>
        Page Setup - Model
        <svg viewBox="0 0 10 10" className="mr-[10px] ml-auto size-[10px]"><path d="M0 0l10 10M10 0L0 10" stroke="#fff" strokeWidth="1.100" /></svg>
      </div>
      <div className="flex gap-[4px] pt-[9px] pl-[8px]">
        <div className="flex w-[404px] flex-col">
          <Group title="Page setup" className="h-[45px]">
            <p className="mt-[7px] ml-[8px] flex h-4 gap-[6px] leading-4"><span>Name:</span><span>&lt;None&gt;</span></p>
          </Group>
          <Group title="Printer/plotter" className="mt-[14px] h-[47px]">
            <div className="mt-[5px] flex items-center pr-[8px] pl-[11px]">
              <Combo text="OKI MC563 PCL6" className="mt-px w-[228px]" />
              <Check text="To file" className="ml-[9px]" />
              <Button text="Setup..." className="ml-auto w-[73px]" />
            </div>
          </Group>
          <Group title="Paper size and orientation" className="mt-[13px] ml-[1px] h-[92px]">
            <div className="flex">
              <div className="flex w-[304px] flex-col pt-[6px] pl-[8px]">
                <div className="flex items-center">
                  <Combo text="A4 210 x 297 mm" className="w-[261px]" />
                  <svg viewBox="0 0 12 14" className="-mt-[2px] ml-[11px] h-[14px] w-[12px]"><path d="M.7.700h7L11.300 4v9.300H.7zM7.500.700V4H11" fill="#fff" stroke="#000" strokeWidth="1.200" /></svg>
                </div>
                <Radio text="Portrait" className="mt-[11px]" />
                <div className="mt-[11px] flex">
                  <Radio text="Landscape" on className="w-[167px]" />
                  <Check text="Plot upside down" className="-mt-px" />
                </div>
              </div>
              <div className="-mt-[4px] flex h-[82px] w-[93px] flex-col border border-t-[#696969] border-r-white border-b-white border-l-[#696969] bg-[#c0c0c0] font-['Liberation_Serif',serif] text-[12px] font-bold tracking-normal text-black">
                <div className="h-[16px] pt-px text-center leading-[16px] tracking-[0.2px]">288.53</div>
                <div className="flex">
                  <span className="-mt-[1px] mb-[1px] h-[52px] w-[11px] rotate-180 text-center text-[12px] leading-[11px] tracking-[0.3px] [writing-mode:vertical-rl]">201.53</span>
                  <svg viewBox="0 0 69 50" className="h-[50px] w-[69px]"><rect x="1" y="1" width="67" height="48" fill="#fff" /><rect x="1" y="1" width="67" height="48" fill="url(#mesh)" stroke="#f00" strokeWidth="2" /></svg>
                </div>
              </div>
            </div>
          </Group>
          <div className="mt-[9px] flex gap-[5px]">
            <div className="flex w-[209px] flex-col">
              <Group title="Plot area" className="h-[39px]">
                <div className="mt-[3px] flex pl-[8px]">
                  <Combo text="Window" className="w-[99px]" />
                  <svg viewBox="0 0 63 17" className="-mt-px ml-[27px] h-[17px] w-[63px]" fill="#fff" stroke="#800000" strokeWidth="1.200" shapeRendering="crispEdges">
                    <rect x=".5" y=".5" width="13" height="13" />
                    <path d="M13.500 11v5M11 13.500h5" stroke="#000" />
                    <path d="M27.500 4.500h11v11h-11z" /><path d="M23.500.500h12v11h-12z" />
                    <path d="M49.500 3.500h12v12h-12z" /><path d="M46 1l9 8M56 0l-9 9" strokeWidth="2" fill="none" />
                  </svg>
                </div>
              </Group>
              <Group title="Plot offset" className="mt-[11px] h-[78px]">
                <div className="mt-[5px] flex items-center pl-[6px]">
                  <span className="-mt-px w-[15px]">X:</span><Spinner value="-8.634" className="w-[51px]" /><Check text="Multipage" className="mt-[2px] ml-[18px]" />
                </div>
                <div className="mt-[13px] flex items-center pl-[6px]">
                  <span className="-mt-[5px] w-[15px]">Y:</span><Spinner value="-8.723" className="w-[51px]" /><Check text="Center the plot" className="ml-[18px]" />
                </div>
              </Group>
            </div>
            <Group title="Plot scale" className="h-[128px] w-[189px]">
              <Check text="Fit to paper" className="mt-[7px] ml-[8px]" />
              <div className="mt-[7px] flex items-center justify-between pr-[6px] pl-[8px]"><span className="-mt-[2px]">Frame width:</span><Spinner value="0" disabled className="w-[60px]" /></div>
              <div className="mt-[8px] flex items-center justify-between pr-[4px] pl-[7px]"><span className="-mt-px">Scale:</span><Combo text="Custom" className="w-[104px]" /></div>
              <div className="mt-[12px] flex pl-[5px]">
                <span className="h-[20px] w-[47px] border border-[#7a7a7a] bg-white pl-[3px] leading-[17px]">1000</span>
                <Combo text="mm" className="ml-[4px] w-[50px]" />
                <span className="w-[19px] text-center leading-[20px]">=</span>
                <span className="h-[20px] w-[56px] border border-[#7a7a7a] bg-white pl-[3px] leading-[17px]">500</span>
              </div>
            </Group>
          </div>
        </div>
        <div className="flex w-[190px] flex-col">
          <Group title="Plot style table (pen assignments)" className="ml-px h-[99px] w-[186px]">
            <div className="mt-[4px] flex items-center pl-[7px]">
              <Combo text="None" className="w-[141px]" />
              <span className="ml-[5px] flex size-[22px] items-center justify-center border border-[#bfbfbf] bg-[#cccccc]"><Icon name="grayprint" /></span>
            </div>
            <Check text="Color Plot Mode" checked className="mt-[11px] ml-[7px]" />
          </Group>
          <Group title="Shaded viewport options" className="mt-[12px] h-[99px] w-[189px]">
            <div className="mt-[8px] flex pl-[8px]"><span className="-mt-px w-[60px]">Shade plot</span><Combo text="As dispalyed" className="w-[108px]" /></div>
            <div className="mt-[6px] flex pl-[8px]"><span className="w-[60px]">Quality</span><Combo text="Normal" className="w-[108px]" /></div>
            <div className="mt-[7px] flex pl-[8px]"><span className="w-[60px] leading-[15px]">DPI</span><span className="h-[20px] w-[108px] border border-[#ccc] pl-[3px] leading-[17px] text-[#838383]">0</span></div>
          </Group>
          <Group title="Plot options" className="mt-[10px] ml-px h-[128px] w-[188px]">
            <div className="flex flex-col gap-[9.750px] pt-[7px] pl-[11px]">
              <Check text="Plot object lineweights" checked disabled />
              <Check text="Plot with plot styles" checked />
              <Check text="Plot paperspace last" checked disabled />
              <Check text="Hide paperspace objects" disabled />
              <Check text="Scale lineweights" disabled />
            </div>
          </Group>
        </div>
      </div>
      <div className="mt-[10px] flex justify-end gap-[5px] pr-[7px]">
        <Button text="Apply to layout" />
        <Button text="Preview..." />
        <Button text="OK" primary />
        <Button text="Close" />
        <Button text="Help" />
      </div>
    </div>
  )
}

export default function App() {
  return (
    <div className="relative flex h-[1040px] w-[1920px] flex-col overflow-hidden bg-[#535353]">
      <Defs />
      <TitleBar />
      <MenuBar />
      <Toolbars />
      <main className="flex h-[894px] shrink-0">
        <div className="flex w-[48px] shrink-0 items-start gap-[2px] pl-px">
          <VBar className="mt-[2px] h-[437px] pt-[5px]" items="line xline pline pentagon rect arc circle | cloud spline ellipse | hatch | block1 block2 | point | table text trim contour" />
          <VBar className="mt-[5px] h-[429px] pt-[5px]" items="erase mirror mirror2 contour array | move rotate | scale stretch | trim extend break1 break2 join | chamfer fillet | bomb explode" />
        </div>
        <div className="flex w-[1602px] shrink-0 flex-col pt-px">
          <DocumentWindow />
          <CommandPanel />
        </div>
        <Inspector />
        <VBar className="mt-[453px] ml-px h-[95px] pt-[5px]" items="ord1 ord2 ord3 ord4" />
      </main>
      <StatusBar />
      <PageSetupDialog />
    </div>
  )
}
